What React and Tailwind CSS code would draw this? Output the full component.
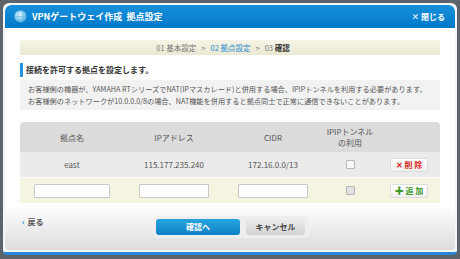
import React from "react";

const jp = { fontFamily: '"Noto Sans CJK JP", "Noto Sans", sans-serif' };

function Globe() {
  return (
    <svg width="13" height="13" viewBox="0 0 14 14">
      <defs>
        <radialGradient id="g" cx="40%" cy="35%" r="65%">
          <stop offset="0%" stopColor="#e6f6ff" />
          <stop offset="60%" stopColor="#8fd0f2" />
          <stop offset="100%" stopColor="#4aa9de" />
        </radialGradient>
      </defs>
      <circle cx="7" cy="7" r="6.5" fill="url(#g)" />
      <ellipse cx="7" cy="7" rx="3" ry="6.3" fill="none" stroke="#5fb6e6" strokeWidth="0.6" />
      <line x1="0.8" y1="7" x2="13.2" y2="7" stroke="#5fb6e6" strokeWidth="0.6" />
    </svg>
  );
}

function Checkbox({ dark }) {
  return (
    <span
      className={
        "inline-block w-[9px] h-[9px] border border-[#b5b5b5] rounded-[1px] " +
        (dark ? "bg-[#e2e2e2]" : "bg-[#f7f7f7]")
      }
    ></span>
  );
}

function TextBox({ w }) {
  return (
    <input
      type="text"
      className={"h-[14px] bg-white border border-[#c8c8c8] rounded-[1px] outline-none " + w}
    />
  );
}

export default function App() {
  return (
    <div className="w-[460px] h-[259px] bg-[#5d636a] pt-[3px] px-[3px] overflow-hidden" style={jp}>
      <div className="h-[252px] bg-[#f4f6f8] rounded-t-[6px] rounded-b-[4px] border-b-[3px] border-[#2a86d6] p-[2px] pb-0">
        <div className="h-[245px] bg-white rounded-t-[6px] rounded-b-[4px] flex flex-col overflow-hidden">
          {/* header */}
          <div className="h-[23px] shrink-0 bg-gradient-to-b from-[#1690dc] to-[#0279c8] rounded-t-[6px] flex items-center pl-[9px] pr-[10px]">
            <Globe />
            <span className="ml-[5px] text-white font-bold text-[9px] leading-none">
              VPNゲートウェイ作成&nbsp;&nbsp;拠点設定
            </span>
            <span className="ml-auto text-white font-bold text-[8px] leading-none">× 閉じる</span>
          </div>

          <div className="flex-1 flex flex-col bg-gradient-to-b from-white via-white via-80% to-[#dcdcdc] px-[15px]">
            {/* steps */}
            <div className="mt-[12px] h-[15px] bg-gradient-to-b from-[#f6f4e6] to-[#ebe8d3] flex items-center justify-center gap-[5px] pr-[14px] text-[7.5px] leading-none text-[#777]">
              <span>01 基本設定</span>
              <span>&gt;</span>
              <span className="text-[#1c8bd4]">02 拠点設定</span>
              <span>&gt;</span>
              <span>
                03 <span className="font-bold text-[#333]">確認</span>
              </span>
            </div>

            {/* heading */}
            <div className="mt-[8px] h-[14px] flex items-center border-l-[3px] border-[#2a92dc] pl-[3px] text-[8px] font-bold text-[#333] leading-none">
              接続を許可する拠点を設定します。
            </div>

            {/* info */}
            <div className="mt-[3px] h-[30px] bg-[#f2f2f2] px-[8px] pt-[3px] text-[7.2px] leading-[12px] text-[#555] whitespace-nowrap">
              <div>お客様側の機器が、YAMAHA RTシリーズでNAT(IPマスカレード)と併用する場合、IPIPトンネルを利用する必要があります。</div>
              <div>お客様側のネットワークが10.0.0.0/8の場合、NAT機能を併用すると拠点同士で正常に通信できないことがあります。</div>
            </div>

            {/* table */}
            <div className="mt-[12px] rounded-t-[4px] overflow-hidden text-[8px] text-[#555]">
              <div className="grid grid-cols-[104px_100px_98px_56px_62px] h-[30px] bg-[#dcdcdc] items-center text-center leading-[11px]">
                <div>拠点名</div>
                <div>IPアドレス</div>
                <div>CIDR</div>
                <div>
                  IPIPトンネル
                  <br />
                  の利用
                </div>
                <div></div>
              </div>
              <div className="grid grid-cols-[104px_100px_98px_56px_62px] h-[26px] bg-[#ebebeb] items-center text-center leading-none border-b border-white">
                <div>east</div>
                <div>115.177.235.240</div>
                <div>172.16.0.0/13</div>
                <div className="flex justify-center">
                  <Checkbox />
                </div>
                <div className="flex justify-center">
                  <button className="w-[38px] h-[14px] bg-gradient-to-b from-white to-[#f0f0f0] border border-[#dedede] rounded-[2px] text-[#d8261c] font-bold text-[8px] leading-none">
                    ✕ 削 除
                  </button>
                </div>
              </div>
              <div className="grid grid-cols-[104px_100px_98px_56px_62px] h-[25px] bg-[#f5f4e1] items-center text-center leading-none">
                <div className="flex justify-center">
                  <TextBox w="w-[76px]" />
                </div>
                <div className="flex justify-center">
                  <TextBox w="w-[70px]" />
                </div>
                <div className="flex justify-center">
                  <TextBox w="w-[70px]" />
                </div>
                <div className="flex justify-center">
                  <Checkbox dark />
                </div>
                <div className="flex justify-center">
                  <button className="w-[38px] h-[14px] bg-gradient-to-b from-white to-[#f0f0f0] border border-[#dedede] rounded-[2px] text-[#3f9a2a] font-bold text-[8px] leading-none">
                    <span className="text-[9px]">✚</span> 追 加
                  </button>
                </div>
              </div>
            </div>

            {/* footer */}
            <div className="mt-[13px] flex items-start">
              <div className="w-[133px] pt-[2px] pl-[2px] flex items-center gap-[3px] text-[8px] leading-none font-bold">
                <span className="text-[#1a86d0]">&lsaquo;</span>
                <span className="text-[#555]">戻る</span>
              </div>
              <div className="flex gap-[6px] bg-[#eeeeee] rounded-[5px] p-[3px] pr-[5px]">
                <button className="w-[84px] h-[16px] rounded-[3px] bg-gradient-to-b from-[#27a4df] to-[#0a82c6] text-white font-bold text-[8px] leading-none">
                  確認へ
                </button>
                <button className="w-[59px] h-[16px] rounded-[3px] bg-gradient-to-b from-[#ececec] to-[#d4d4d4] text-[#444] font-bold text-[8px] leading-none">
                  キャンセル
                </button>
              </div>
            </div>
          </div>
        </div>
      </div>
    </div>
  );
}
